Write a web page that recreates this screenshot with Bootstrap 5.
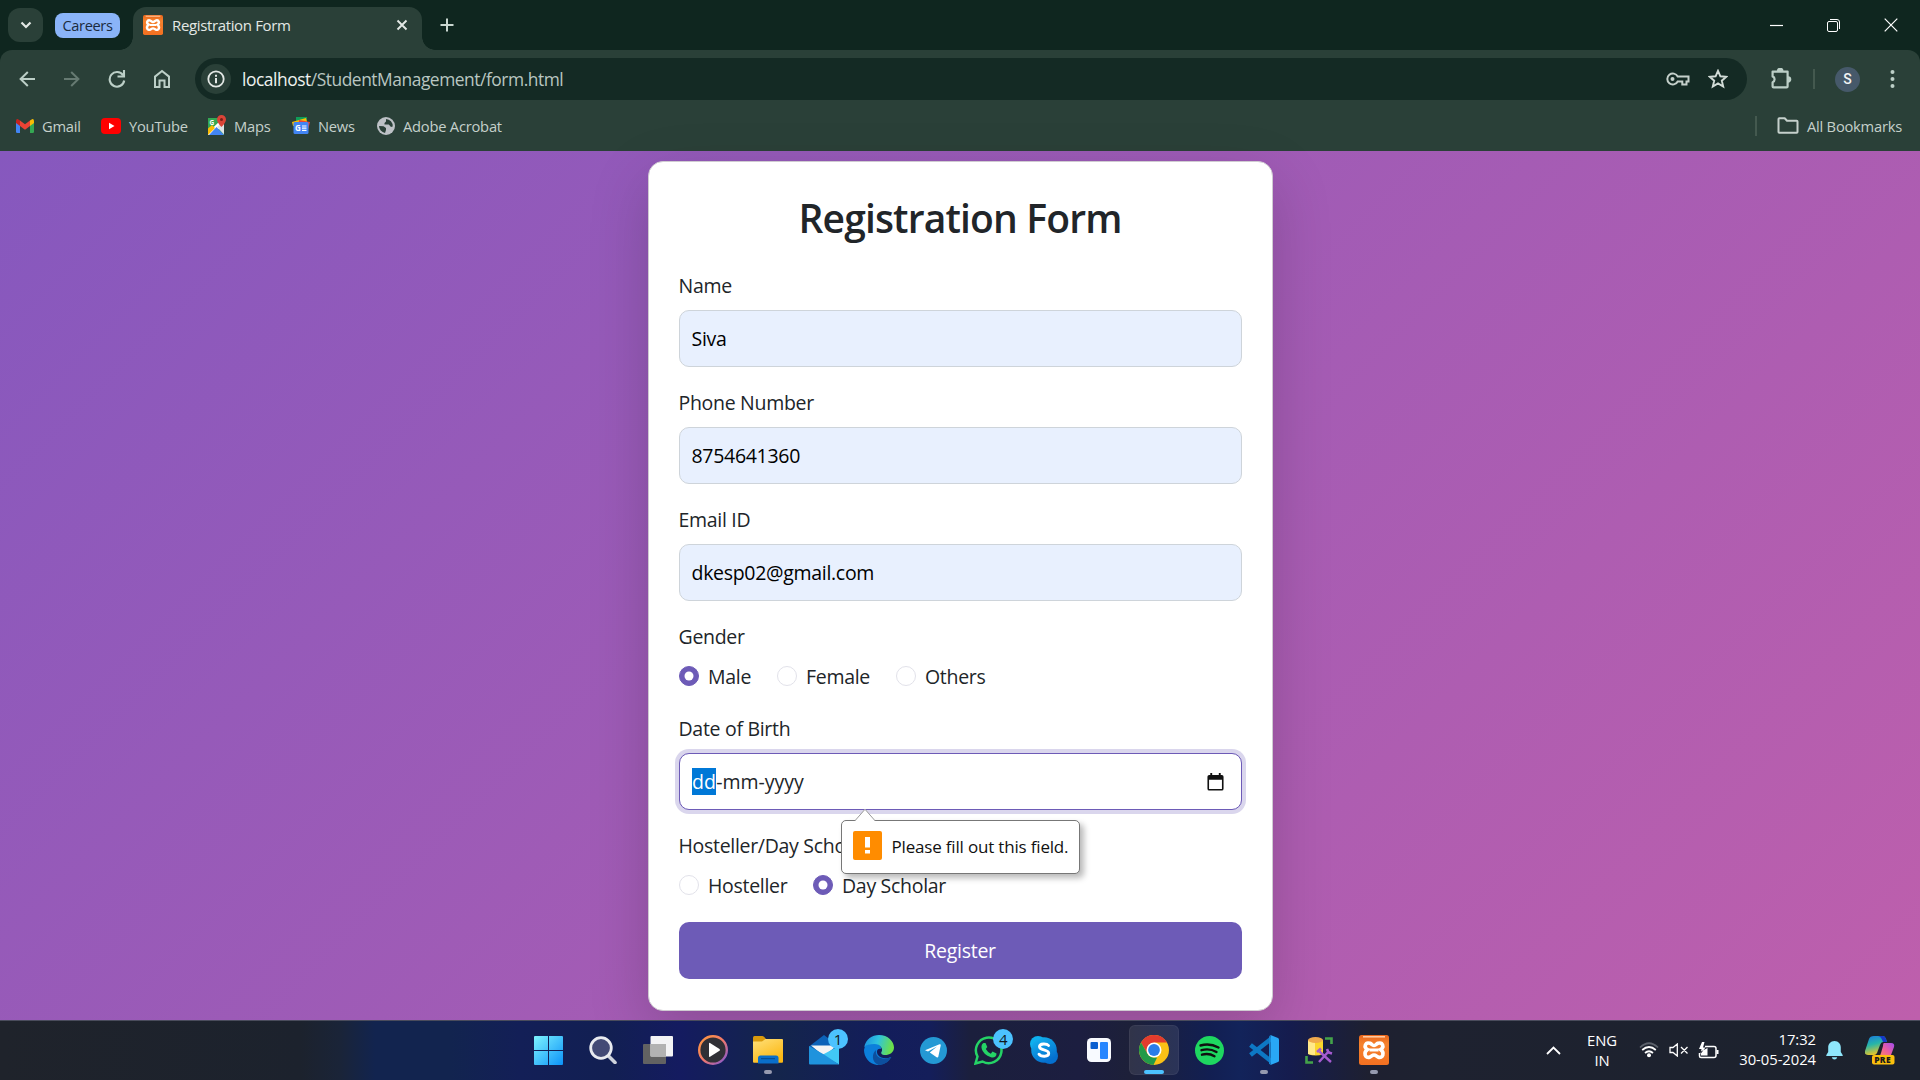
<!DOCTYPE html>
<html lang="en">
<head>
<meta charset="utf-8">
<title>Registration Form</title>
<link rel="stylesheet" href="https://cdn.jsdelivr.net/npm/bootstrap@5.3.0/dist/css/bootstrap.min.css">
<style>
html{font-size:20px}
body{width:1920px;height:1080px;overflow:hidden;font-family:"Open Sans","Noto Sans",sans-serif;font-size:19.5px;letter-spacing:-.3px;line-height:30px;color:#212529;background:#0f261f}
svg{display:block;flex:none}
/* browser chrome */
.tabstrip{height:50px;padding-left:8px;background:#0f261f;color:#e3e8e5;font-size:15px;letter-spacing:-.36px}
.tab-search{width:35px;height:34px;border-radius:12px;background:#2a4038;margin-right:12px}
.tab-group{width:65px;height:25px;border-radius:8px;background:#8ab4f8;color:#1b2b3d;line-height:24px;margin-right:13px;font-size:14.6px}
.tab-open{position:relative;width:289px;height:43px;margin-top:7px;padding:0 14px 7px 10px;border-radius:13px 13px 0 0;background:#2a4038}
.tab-open::before,.tab-open::after{content:"";position:absolute;bottom:0;width:13px;height:13px}
.tab-open::before{left:-13px;background:radial-gradient(circle at 0 0,transparent 12.5px,#2a4038 13px)}
.tab-open::after{right:-13px;background:radial-gradient(circle at 100% 0,transparent 12.5px,#2a4038 13px)}
.tab-name{margin-left:9px;margin-right:auto}
.new-tab{margin-left:17px}
.window-buttons{padding-right:22px;gap:44px}
.toolbar{height:58px;padding:8px 0 8px 18px;background:#2a4038;border-radius:12px 12px 0 0}
.nav-glyphs{width:177px;gap:27px}
.omnibox{width:1552px;height:42px;border-radius:21px;background:#142a24;padding:0 19px 0 6px;color:#b9c6c1;font-size:17.4px;letter-spacing:-.46px}
.site-info{width:30px;height:30px;border-radius:50%;background:#2a4038;margin-right:10px}
.url{padding-left:1px}
.url b{font-weight:400;color:#eef2f0}
.star-glyph{margin-left:18px}
.ext-glyph{margin-left:23px;margin-right:21px}
.avatar-s{width:25px;height:25px;margin:0 30px 0 20px;border-radius:50%;background:#46596a;color:#f1f3f4;font:500 14px/25px Roboto,sans-serif;letter-spacing:0}
.vline{width:2px;height:20px;background:#44594f}
.bookmarks{height:43px;padding:0 18px 8px 16px;background:#2a4038;color:#c5d0cb;font-size:14.7px;letter-spacing:-.22px}
.bookmarks span{padding-left:8px}
.bm-a{width:67px}.bm-b{width:87px}.bm-c{width:66px}
.folder-glyph{margin-left:20px}
/* page */
.viewport{height:869px;padding-top:10px;background:linear-gradient(135deg,#8658be,#be5fac)}
.form-card{width:625px;height:850px;padding:30px;border:1px solid #cfcbd1;border-radius:15px;background:#fff;box-shadow:0 20px 60px rgba(0,0,0,.175)}
.form-card h2{font-size:39px;line-height:48px;font-weight:600;letter-spacing:-.84px;margin-bottom:28.5px;padding-top:1.5px}
.field{margin-bottom:20px}
.form-label{margin-bottom:9px;padding-top:1px;display:block}
.form-control{height:57px;padding:0 12px;border:1px solid #ced4da;border-radius:10px;font-size:19.5px;letter-spacing:-.3px;color:#212529;line-height:30px}
.autofilled,.autofilled:focus{background:#e8f0fe;color:#000}
.date-focus{border-color:#6d5bb7;box-shadow:0 0 0 4px rgba(109,91,183,.25)}
.seg-selected{background:#0078d7;color:#fff;line-height:27px;padding:0 .5px}
.date-text{letter-spacing:-.05px;padding-top:1px}
.picker-glyph{margin-right:5px}
.form-check{min-height:30px;height:30px;padding-left:29.5px;margin:0}
.form-check label{padding-top:1px}
.form-check .form-check-input{width:20px;height:20px;margin-top:5px;margin-left:-29.5px;border-color:#e2e2ea}
.form-check .form-check-input:checked{background-color:#6d5bb7;border-color:#6d5bb7}
.choices{height:32px;margin-bottom:20px}
.w-male{width:98px}.w-female{width:119px}.w-host{width:134px}
.btn-register{height:57px;border-radius:10px;background:#6d5bb7;color:#fff;font-size:19.5px;letter-spacing:-.25px}
.btn-register:hover{background:#5d4ca5;color:#fff}
.bubble{position:absolute;left:162px;top:67px;width:239px;height:54px;padding-left:11px;border:1px solid #777;border-radius:5px;background:#fff;box-shadow:4px 4px 6px rgba(0,0,0,.28);color:#111;font-size:17px;letter-spacing:-.18px;z-index:3}
.bubble .tip{position:absolute;left:12px;top:-13px}
.bubble .warn{margin:-4px 10px 0 0}
/* taskbar */
.taskbar{height:60px;border-top:1px solid #4a4c5c;background:linear-gradient(90deg,#1f232b 0,#1c222d 300px,#1a2438 340px,#12244f 375px,#12244f 450px,#131f57 520px,#121f52 610px,#141b60 680px,#14254b 775px,#131d5b 880px,#141e5a 930px,#1b1f3d 970px,#1c1e40 1080px,#1d2039 1130px,#121f52 1210px,#12235a 1240px,#151c4e 1290px,#1e2030 1370px,#1e2230 1430px,#1c222d 100%);color:#fff;padding-left:520.5px;padding-bottom:1px}
.tile{position:relative;width:55.1px;height:50px}
.tile.current::before{content:"";position:absolute;left:2px;width:50px;height:50px;border-radius:6px;background:rgba(255,255,255,.09);border:1px solid rgba(255,255,255,.05)}
.tile svg{position:relative}
.tile .pip{position:absolute;bottom:1px;left:23.5px;width:8px;height:4px;border-radius:2px;background:#969aaf}
.tile.current .pip{left:17.5px;width:20px;background:#4cc2ff}
.count{position:absolute;left:32px;top:4px;width:20px;height:20px;border-radius:50%;background:#4cc2ff;color:#101820;font-size:15px;line-height:20px;letter-spacing:0}
.tray{font-size:14.8px;letter-spacing:-.05px;line-height:20px;padding-right:25px}
.lang{width:40px;margin-left:21px;margin-right:17px}
.tray-status{gap:9.5px}
.clock{width:90px;margin:0 10px 2px 7px}
.copilot{margin-left:22px}
</style>
</head>
<body class="d-flex flex-column">
<header>
 <div class="tabstrip d-flex align-items-center">
  <div class="tab-search d-flex align-items-center justify-content-center"><svg width="12" height="8" viewBox="0 0 12 8" fill="none" stroke="#e3e8e5" stroke-width="2.2"><path d="M1.500 1.500 6 6l4.500-4.500"/></svg></div>
  <div class="tab-group text-center">Careers</div>
  <div class="tab-open d-flex align-items-center">
   <svg width="20" height="20" viewBox="0 0 30 30"><use href="#xampp"/></svg>
   <span class="tab-name">Registration Form</span>
   <svg width="12" height="12" viewBox="0 0 12 12" stroke="#e3e8e5" stroke-width="1.9"><path d="m1.500 1.500 9 9m0-9-9 9"/></svg>
  </div>
  <svg class="new-tab" width="16" height="16" viewBox="0 0 16 16" stroke="#c9d6d0" stroke-width="2"><path d="M8 1.500v13M1.500 8h13"/></svg>
  <div class="window-buttons ms-auto d-flex align-items-center">
   <svg width="13" height="13" viewBox="0 0 13 13" stroke="#fff" stroke-width="1.200"><path d="M0 6.500h13"/></svg>
   <svg width="13" height="13" viewBox="0 0 13 13" fill="none" stroke="#fff"><rect x=".5" y="2.500" width="10" height="10" rx="1.500"/><path d="M3 .5h7a2.500 2.500 0 0 1 2.500 2.500v7"/></svg>
   <svg width="14" height="14" viewBox="0 0 14 14" stroke="#fff" stroke-width="1.200"><path d="m.7.7 12.600 12.600m0-12.600L.7 13.300"/></svg>
  </div>
 </div>
 <div class="toolbar d-flex align-items-center">
  <div class="nav-glyphs d-flex align-items-center">
   <svg width="18" height="18" viewBox="0 0 18 18" fill="none" stroke="#bccfc7" stroke-width="2"><path d="M17 9H3m6.800-7L2.600 9l7.200 7"/></svg>
   <svg width="18" height="18" viewBox="0 0 18 18" fill="none" stroke="#667a72" stroke-width="2"><path d="M1 9h14M8.200 2l7.200 7-7.200 7"/></svg>
   <svg width="18" height="18" viewBox="0 0 18 18" fill="none" stroke="#bccfc7" stroke-width="2.100"><path d="M15 5.200A7.300 7.300 0 1 0 16.200 10.500M16 0v6.500H9.500"/></svg>
   <svg width="18" height="20" viewBox="0 0 18 20" fill="none" stroke="#bccfc7" stroke-width="2"><path d="M2 7.600 9 2l7 5.600V18h-4.500v-6.500h-5V18H2z"/></svg>
  </div>
  <div class="omnibox d-flex align-items-center">
   <div class="site-info d-flex align-items-center justify-content-center"><svg width="18" height="18" viewBox="0 0 18 18"><circle cx="9" cy="9" r="7.700" fill="none" stroke="#e3e8e5" stroke-width="1.800"/><path fill="#e3e8e5" d="M8 8h2v5.200H8zM8 4.800h2v2H8z"/></svg></div>
   <span class="url me-auto"><b>localhost</b>/StudentManagement/form.html</span>
   <svg width="24" height="14" viewBox="0 0 24 14" fill="none" stroke="#c5d0cb" stroke-width="2"><path d="M11.700 4.500H22.500v5h-2v3h-4.200v-3h-4.600A5.500 5.500 0 1 1 11.700 4.500z"/><circle cx="6.500" cy="7" r="2" fill="#c5d0cb" stroke="none"/></svg>
   <svg class="star-glyph" width="20" height="20" viewBox="0 0 20 20" fill="none" stroke="#d2dcd7" stroke-width="1.900"><path d="m10 1.800 2.400 5.500 5.900.5-4.500 3.900 1.400 5.800-5.200-3.100-5.200 3.100 1.400-5.800-4.500-3.900 5.900-.5z"/></svg>
  </div>
  <svg class="ext-glyph" width="22" height="22" viewBox="0 0 22 22" fill="none" stroke="#bccfc7" stroke-width="2.200"><path d="M2.600 3.600h15v14.800q0 1-1 1H3.600q-1 0-1-1v-4.200a3.100 3.100 0 0 0 0-5.800z" stroke-linejoin="round"/><path d="M8 3a2.200 2.200 0 0 1 4.400 0M18 9.300a2.200 2.200 0 0 1 0 4.400" fill="#bccfc7"/></svg>
  <div class="vline"></div>
  <div class="avatar-s text-center">S</div>
  <svg width="5" height="20" viewBox="0 0 5 20" fill="#bccfc7"><circle cx="2.500" cy="3" r="2"/><circle cx="2.500" cy="10" r="2"/><circle cx="2.500" cy="17" r="2"/></svg>
 </div>
 <div class="bookmarks d-flex align-items-center">
  <svg width="18" height="14" viewBox="0 0 18 14"><path fill="#4285f4" d="M0 2.500 4 5v9H1.200Q0 14 0 12.800z"/><path fill="#34a853" d="M18 2.500 14 5v9h2.800q1.200 0 1.200-1.200z"/><path fill="#fbbc04" d="m14 1.500 2-1.300q2-.5 2 2V4l-4 3z"/><path fill="#ea4335" d="m4 1.500 5 3.800 5-3.800V7l-5 3.800L4 7z"/><path fill="#c5221f" d="M4 1.500 2 .2Q0-.3 0 2.200V4l4 3z"/></svg><span class="bm-a">Gmail</span>
  <svg width="20" height="16" viewBox="0 0 20 16"><rect width="20" height="16" rx="4" fill="#f00"/><path fill="#fff" d="m8 4.700 5.500 3.300L8 11.300z"/></svg><span class="bm-b">YouTube</span>
  <svg width="18" height="21" viewBox="0 0 18 21"><path fill="#34a853" d="M0 3h16v17H0z"/><path fill="#fff" d="M0 17.500 14 4l2 2v3L4 20H0z"/><path fill="#fbbc04" d="m0 13.500 4-3.500 3 3L0 20z"/><path fill="#4285f4" d="m1 20 7.500-8 7.500 8z"/><path fill="#dfe3e6" d="m9 12 7-6v13.500z"/><text x="1.500" y="9.500" font-size="6.500" font-weight="700" fill="#fff">G</text><path fill="#db4437" d="M13.500 0A4.500 4.500 0 0 1 18 4.500c0 3-4.500 7.500-4.500 7.500S9 7.500 9 4.500A4.500 4.500 0 0 1 13.500 0z"/><circle cx="13.500" cy="4.500" r="1.500" fill="#7b1e18"/></svg><span class="bm-c">Maps</span>
  <svg width="18" height="19" viewBox="0 0 18 19"><path fill="#0f9d58" d="M4 1h11v9H4z"/><path fill="#fbbc04" d="m0 6 14-4 2 8H1z"/><path fill="#ea4335" d="m7 4 11 2-2 8H6z"/><rect x="1.500" y="6" width="15" height="12" rx="1.500" fill="#4285f4"/><text x="3" y="15" font-size="8" font-weight="700" fill="#fff">G</text><path stroke="#fff" stroke-width="1.200" d="M10 10h4.500M10 12.200h4.500M10 14.400h4.500"/></svg><span class="bm-a">News</span>
  <svg width="18" height="20" viewBox="0 0 18 18"><circle cx="9" cy="9" r="9" fill="#bdc1c6"/><path fill="#2a4038" d="M9 2v2.500L7.500 6v1.500h4.300L14 10l1.700-.5A7 7 0 0 0 9 2zM2 9l4.500.3L9 11v2l-1 3A7.200 7.200 0 0 1 2 9z"/></svg><span>Adobe Acrobat</span>
  <div class="vline ms-auto"></div>
  <svg class="folder-glyph" width="22" height="17" viewBox="0 0 22 17" fill="none" stroke="#c5d0cb" stroke-width="2"><path stroke-linejoin="round" d="M1.500 2q0-.8.8-.8h5.400L10 3.700h9.700q.8 0 .8.800v10.500q0 .8-.8.8H2.300q-.8 0-.8-.8z"/></svg><span>All Bookmarks</span>
 </div>
</header>

<main class="viewport d-flex justify-content-center align-items-start">
 <form class="form-card">
  <h2 class="text-center">Registration Form</h2>
  <div class="field"><label class="form-label">Name</label><input class="form-control autofilled" value="Siva"></div>
  <div class="field"><label class="form-label">Phone Number</label><input class="form-control autofilled" value="8754641360"></div>
  <div class="field"><label class="form-label">Email ID</label><input class="form-control autofilled" value="dkesp02@gmail.com"></div>
  <label class="form-label">Gender</label>
  <div class="choices d-flex">
   <div class="form-check w-male"><input class="form-check-input" type="radio" name="gender" checked><label>Male</label></div>
   <div class="form-check w-female"><input class="form-check-input" type="radio" name="gender"><label>Female</label></div>
   <div class="form-check"><input class="form-check-input" type="radio" name="gender"><label>Others</label></div>
  </div>
  <div class="field">
   <label class="form-label">Date of Birth</label>
   <div class="position-relative">
    <div class="form-control date-focus d-flex align-items-center justify-content-between">
     <div class="date-text"><span class="seg-selected">dd</span>-mm-yyyy</div>
     <svg class="picker-glyph" width="17" height="18" viewBox="0 0 17 19"><path d="M3 0h2v2h7V0h2v2h1.200Q17 2 17 4v12.500Q17 18.500 15.200 18.500H1.800Q0 18.500 0 16.500V4q0-2 1.800-2H3zM1.700 7v9.800h13.600V7z" fill="#111" fill-rule="evenodd"/></svg>
    </div>
    <div class="bubble d-flex align-items-center">
     <svg class="tip" width="22" height="14" viewBox="0 0 22 14"><path d="M1 14V13L11 1l10 12v1z" fill="#fff"/><path d="m1 12.700 10-11.400 10 11.400" fill="none" stroke="#999"/></svg>
     <svg class="warn" width="29" height="29" viewBox="0 0 29 29"><rect width="29" height="29" rx="2" fill="#ff8c00"/><path fill="#fff" d="M12 6h5v10.500h-5zM12 19h5v3.500h-5z"/></svg>
     <span>Please fill out this field.</span>
    </div>
   </div>
  </div>
  <label class="form-label">Hosteller/Day Scholar</label>
  <div class="choices d-flex">
   <div class="form-check w-host"><input class="form-check-input" type="radio" name="stay"><label>Hosteller</label></div>
   <div class="form-check"><input class="form-check-input" type="radio" name="stay" checked><label>Day Scholar</label></div>
  </div>
  <button type="button" class="btn btn-register w-100">Register</button>
 </form>
</main>

<footer class="taskbar d-flex align-items-center">
 <svg width="0" height="0" class="position-absolute"><defs>
  <linearGradient id="gw" x2="1" y2="1"><stop stop-color="#7df3ff"/><stop offset="1" stop-color="#0c92f8"/></linearGradient>
  <linearGradient id="gm" x2="1" y2="1"><stop stop-color="#ff9a3c"/><stop offset=".5" stop-color="#f2796b"/><stop offset="1" stop-color="#7a55d8"/></linearGradient>
  <linearGradient id="gf" x2=".6" y2="1"><stop stop-color="#ffe07a"/><stop offset="1" stop-color="#fcb813"/></linearGradient>
  <linearGradient id="ge" x2="1" y2=".2"><stop stop-color="#1a8be0"/><stop offset=".5" stop-color="#2fc3df"/><stop offset="1" stop-color="#6be04a"/></linearGradient>
  <linearGradient id="gs" x2=".5" y2="1"><stop stop-color="#14b8f2"/><stop offset="1" stop-color="#0570cf"/></linearGradient>
  <linearGradient id="gc1" x2=".3" y2="1"><stop stop-color="#1a78e0"/><stop offset=".5" stop-color="#27b6a8"/><stop offset="1" stop-color="#e5c52a"/></linearGradient>
  <linearGradient id="gc2" x1="1" x2="0" y2="1"><stop stop-color="#a14df0"/><stop offset=".5" stop-color="#ee5f9d"/><stop offset="1" stop-color="#ff9350"/></linearGradient>
  <linearGradient id="gx" y2="1" x2="0"><stop stop-color="#e8651a"/><stop offset=".3" stop-color="#f5822e"/><stop offset="1" stop-color="#f37021"/></linearGradient>
  <g id="xampp"><rect width="30" height="30" rx="2.500" fill="url(#gx)"/><path d="M4 1.800h22" stroke="#ffc89d" stroke-width="1.600"/><path d="M11 8.300c-5-1.500-6.500 4.200-2.500 6.200-4.500 3-2.500 9.500 2.500 7.500 2-.8 2-2 4-2s2 1.200 4 2c5 2 7-4.500 2.500-7.500 4-2 2.500-7.700-2.500-6.200-2 .7-2 2.200-4 2.200s-2-1.500-4-2.200z" fill="none" stroke="#fff" stroke-width="3.600"/><path d="M10.500 15h9" stroke="#fff" stroke-width="3"/></g>
 </defs></svg>
 <div class="tile d-flex align-items-center justify-content-center"><svg width="29" height="29" viewBox="0 0 29 29" fill="url(#gw)"><path d="M1 0h13v14H0V1q0-1 1-1zM15 0h13q1 0 1 1v13H15zM0 15h14v14H1q-1 0-1-1zM15 15h14v13q0 1-1 1H15z"/></svg></div>
 <div class="tile d-flex align-items-center justify-content-center"><svg width="28" height="28" viewBox="0 0 28 28"><path d="m18.500 19 7.500 7.500" stroke="#cfd3dc" stroke-width="3.600" stroke-linecap="round"/><circle cx="12" cy="12" r="10.300" fill="#434a75" stroke="#e9ebf0" stroke-width="2.800"/></svg></div>
 <div class="tile d-flex align-items-center justify-content-center"><svg width="30" height="28" viewBox="0 0 30 28"><rect y="8" width="23" height="20" rx="1" fill="#626262"/><rect x="7.500" width="22.500" height="20.500" rx="1" fill="#f3f3f5"/><path d="M7.500 8H23v12.500H7.500z" fill="#b2b2b2"/></svg></div>
 <div class="tile d-flex align-items-center justify-content-center"><svg width="30" height="30" viewBox="0 0 30 30"><circle cx="15" cy="15" r="13.800" fill="#303036" stroke="url(#gm)" stroke-width="2.400"/><path d="M11 8.500q0-1 1-.5l9.500 6q1 1 0 1.800l-9.500 6q-1 .4-1-.6z" fill="#fff"/></svg></div>
 <div class="tile d-flex align-items-center justify-content-center"><svg width="30" height="28" viewBox="0 0 30 28"><path fill="#d99a0c" d="M0 1.500Q0 0 1.500 0h7.700q1 0 1.800.8L13 3v5H0z"/><path fill="url(#gf)" d="M0 5.500h9L12.500 3H29q1 0 1 1v21.500q0 1.200-1 1.200H1q-1 0-1-1z"/><path fill="#0a6fca" d="M5 27.500V22q0-2.500 2.500-2.500H23q2.500 0 2.500 2.500v5.500z"/><path d="M8 22.600h14" stroke="#064f96" stroke-width="1.200"/></svg><i class="pip"></i></div>
 <div class="tile d-flex align-items-center justify-content-center"><svg width="30" height="30" viewBox="0 0 30 30"><path fill="#0c62b8" d="M0 11.500 15 0l15 11.500V22H0z"/><path fill="#f4f4f4" d="M2 10.500h26L15 21z"/><path fill="#41c8f5" d="M30 11 13 20l17 9.500z"/><path fill="#1f93dd" d="m0 11 15 8.600L30 29.500H1q-1 0-1-1z"/></svg><span class="count text-center">1</span></div>
 <div class="tile d-flex align-items-center justify-content-center"><svg width="30" height="30" viewBox="0 0 30 30"><path fill="#0c7fdb" d="M1 11c8-6 17-2 16 3-4-1-5 3-3 6 3 4 9 4 13 2-3 6-9 8-14 8C5 29 0 22 0 15z"/><path fill="#0d4f9e" d="M12 15c-1.500 8 8 11 15.500 6.800C25 27 20 30 14.500 30 7 27 8 18 12 15z"/><path fill="url(#ge)" d="M.2 12C2 4 8 0 15 0c9 0 15 6.500 15 12.500 0 5-4.500 7.500-9 7.500-3 0-4.500-1.500-3.500-3 2-3-1-8-7-8C6 9 2 10 .2 12z"/></svg></div>
 <div class="tile d-flex align-items-center justify-content-center"><svg width="27" height="27" viewBox="0 0 27 27"><circle cx="13.500" cy="13.500" r="13.500" fill="#2499d4"/><path fill="#fff" d="m5 13.300 14.500-6q1.500-.4 1.200 1.200l-2.400 11.300q-.5 1.200-1.700.4L9.800 15.500 17 9.500l-9 5z"/></svg></div>
 <div class="tile d-flex align-items-center justify-content-center"><svg width="30" height="30" viewBox="0 0 30 30"><path d="M1.500 28.500l2-7A12.800 12.800 0 1 1 8.500 26.500z" fill="none" stroke="#25d366" stroke-width="2.500"/><path fill="#25d366" d="M9.500 8h2l1.800 4-1.500 2q2 3.500 5 4.700l1.700-2.200 4 2c.3 3.500-3 4.500-5.500 3.700-5-1.500-8.500-5-9.500-9.500-.3-2 .7-4 2-4.700z"/></svg><span class="count text-center">4</span></div>
 <div class="tile d-flex align-items-center justify-content-center"><svg width="28" height="28" viewBox="0 0 28 28"><circle cx="8" cy="8" r="8" fill="#0eb0ee"/><circle cx="20" cy="20" r="8" fill="#0570cf"/><circle cx="14" cy="14" r="12.800" fill="url(#gs)"/><path d="M18.500 9.500C17 7.500 9.500 7 9.500 10.700c0 4 9.200 2.200 9.200 6.600 0 4-7.700 3.700-9.700.9" fill="none" stroke="#fff" stroke-width="2.900" stroke-linecap="round"/></svg></div>
 <div class="tile d-flex align-items-center justify-content-center"><svg width="24" height="24" viewBox="0 0 24 24"><rect width="24" height="24" rx="4.500" fill="#f8faff"/><rect x="3.500" y="4" width="7.500" height="7" rx="1" fill="#0b5fd0"/><rect x="13" y="4" width="8" height="17" rx="1" fill="#2786ff"/></svg></div>
 <div class="tile current d-flex align-items-center justify-content-center"><svg width="30" height="30" viewBox="0 0 30 30"><circle cx="15" cy="15" r="15" fill="#fbc116"/><path fill="#e33b2e" d="M2 7.500A15 15 0 0 1 28 7.500H15L8.500 18.700z"/><path fill="#229a49" d="M2 7.500 8.500 18.700q2.500 4 6.500 3.800l3 .2L14.500 30A15 15 0 0 1 2 7.500z"/><circle cx="15" cy="15" r="7.500" fill="#fff"/><circle cx="15" cy="15" r="5.900" fill="#2b7de9"/></svg><i class="pip"></i></div>
 <div class="tile d-flex align-items-center justify-content-center"><svg width="29" height="29" viewBox="0 0 29 29"><circle cx="14.500" cy="14.500" r="14.500" fill="#1ed760"/><path d="M5.500 9.500c6-1.700 12.500-1 18 2M6.500 14.200c5-1.400 10.500-.8 15 1.800M7 18.700c4.300-1.200 8.800-.7 12.500 1.500" fill="none" stroke="#101010" stroke-width="2.400" stroke-linecap="round"/></svg></div>
 <div class="tile d-flex align-items-center justify-content-center"><svg width="30" height="30" viewBox="0 0 30 30"><path d="m1.500 10 21 16.500M1.500 20l21-16.500" stroke="#0d78c4" stroke-width="4.500"/><path fill="#29a8f5" d="m21.500 0 7.500 3q1 .5 1 1.500v21q0 1-1 1.500l-7.500 3z"/><path fill="#1784d0" d="M21.500 0v30L20 28.500v-27z"/></svg><i class="pip"></i></div>
 <div class="tile d-flex align-items-center justify-content-center"><svg width="29" height="29" viewBox="0 0 29 29"><path fill="#fbd52b" d="M3 4h15v14q-7 3-15 0z"/><path fill="#ffe98a" d="M3 4h7v15q-4 0-7-1z"/><ellipse cx="10.500" cy="4" rx="7.500" ry="3" fill="#efaa4d"/><path d="M20 2.500h6.500V8M1.500 20v6.500H8" fill="none" stroke="#44a34a" stroke-width="2.600"/><path d="m14 26 10-11M26 26 14.500 15.500" stroke="#a55bd0" stroke-width="2.400"/><path d="m12 16 4-3.500M22 13l1.500 3.500 3.500 1" stroke="#a55bd0" stroke-width="2.600" fill="none"/></svg></div>
 <div class="tile d-flex align-items-center justify-content-center"><svg width="30" height="30" viewBox="0 0 30 30"><use href="#xampp"/></svg><i class="pip"></i></div>

 <div class="tray ms-auto d-flex align-items-center">
  <svg width="15" height="9" viewBox="0 0 15 9" fill="none" stroke="#fff" stroke-width="1.800"><path d="m1 8 6.500-6.500L14 8"/></svg>
  <div class="lang text-center">ENG<br>IN</div>
  <div class="tray-status d-flex align-items-center">
   <svg width="20" height="16" viewBox="0 0 20 16" fill="none" stroke-width="1.700"><path d="M1 5.500Q10-3 19 5.500" stroke="#5c616b"/><path d="M3.200 8q6.800-6 13.600 0M6 11q4-3.500 8 0" stroke="#fff"/><circle cx="10" cy="13.200" r="2" fill="#fff"/></svg>
   <svg width="20" height="14" viewBox="0 0 20 14" fill="none" stroke="#fff" stroke-width="1.300"><path d="M1 4.500h3L8.300 1v12L4 9.500H1zM12 4l6.500 6.500m0-6.500L12 10.500"/></svg>
   <svg width="21" height="17" viewBox="0 0 21 17"><path d="M7 4.500h9q2 0 2 2v7q0 2-2 2H3q-1.500 0-1.500-1.500v-3" fill="none" stroke="#fff" stroke-width="1.500"/><path fill="#fff" d="M3 9.500 9.500 6v7.500H3zM18.500 8h2v4h-2zM4 0 1 7h2.500L2.500 12l5-6.500H5L6.500 0z"/></svg>
  </div>
  <div class="clock text-end">17:32<br>30-05-2024</div>
  <svg width="17" height="19" viewBox="0 0 17 19" fill="#8ee6fb"><path d="M8.500 0c4 0 6.300 3 6.300 6.500V11l2 3.200q.3.800-.6.800H.8q-.9 0-.6-.8l2-3.200V6.500C2.200 3 4.500 0 8.500 0zM5.800 16.200h5.400q-.5 2.300-2.700 2.300t-2.700-2.300z"/></svg>
  <svg class="copilot" width="30" height="30" viewBox="0 0 30 30"><path fill="url(#gc1)" d="M9 1h9q2 0 3 3l1 3h-4q-2 0-3 3l-3 8q-1 2-3 2H3q-4 0-3-4L4 4q1-3 5-3z"/><path fill="#1639c9" d="M13 1h5q2 0 3 3l1 3h-4q-2-6-5-6z"/><path fill="url(#gc2)" d="M19 8h7q4 0 3 4l-3 8q-1 3-4 3h-9q2-1 3-5l2-7q0-3 1-3z"/><rect x="7" y="20" width="22.500" height="9.500" rx="2" fill="#fbbf0d"/><text x="9.200" y="27.800" font-size="8.500" font-weight="800" letter-spacing=".3" fill="#1b1b1b">PRE</text></svg>
 </div>
</footer>
<script src="https://cdn.jsdelivr.net/npm/bootstrap@5.3.0/dist/js/bootstrap.bundle.min.js"></script>
</body>
</html>
